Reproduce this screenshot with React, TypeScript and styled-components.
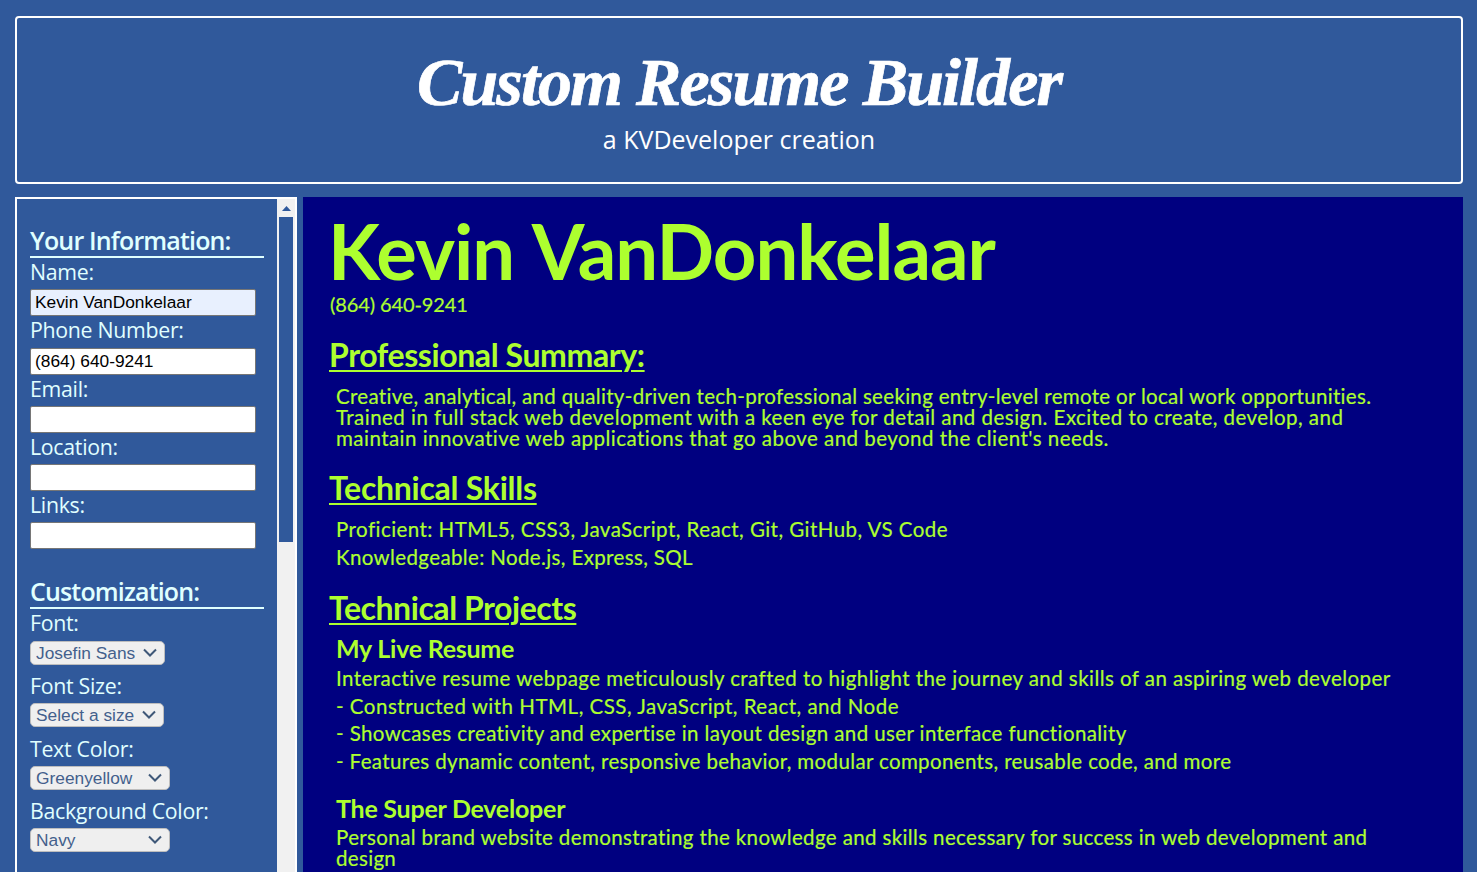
import React from "react";
import styled, { createGlobalStyle } from "styled-components";

const Global = createGlobalStyle`
  html, body { margin: 0; padding: 0; height: 100%; overflow: hidden; background: #30599b; }
  * { box-sizing: border-box; }
`;

const Page = styled.div`
  height: 872px;
  padding: 16px 14px 0 15px;
  display: flex;
  flex-direction: column;
  gap: 13px;
  overflow: hidden;
`;

const Header = styled.header`
  height: 168px;
  flex: none;
  border: 2px solid #fff;
  border-radius: 4px;
  display: flex;
  flex-direction: column;
  align-items: center;
  color: #fff;
`;

const Title = styled.h1`
  margin: 24px 0 0;
  font: italic 700 68px/80px "Liberation Serif", serif;
  letter-spacing: -1.9px;
  -webkit-text-stroke: 0.7px #fff;
`;

const Tagline = styled.div`
  margin-top: -1px;
  font: 400 25px/36px "Open Sans", sans-serif;
`;

const Body = styled.div`
  flex: 1;
  min-height: 0;
  display: flex;
  gap: 6px;
`;

const Sidebar = styled.aside`
  width: 282px;
  flex: none;
  border: 2px solid #fff;
  border-bottom: none;
  display: flex;
  overflow: hidden;
  color: #e0ffff;
`;

const SideContent = styled.div`
  flex: 1;
  padding: 27px 12px 0 13px;
  font-family: "Open Sans", sans-serif;
`;

const Track = styled.div`
  width: 18px;
  flex: none;
  background: #f1f1f1;
  padding: 0 2px;
  display: flex;
  flex-direction: column;
  align-items: center;
`;

const ArrowBox = styled.div`
  height: 18px;
  width: 100%;
  display: flex;
  align-items: center;
  justify-content: center;
`;

const Thumb = styled.div`
  width: 14px;
  height: 325px;
  background: #30599b;
`;

const SideHeading = styled.h2<{ $top?: number }>`
  margin: ${(p) => p.$top ?? 0}px 0 0;
  height: 32px;
  width: 234px;
  border-bottom: 2px solid #e0ffff;
  font: 600 25px/28px "Open Sans", sans-serif;
  letter-spacing: -0.85px;
  white-space: nowrap;
`;

const Field = styled.label`
  display: block;
`;

const FieldLabel = styled.div`
  font: 400 21.33px/28px "Open Sans", sans-serif;
  height: 30.25px;
  margin-bottom: 1px;
  letter-spacing: -0.3px;
`;

const TextInput = styled.input<{ $autofilled?: boolean }>`
  display: block;
  width: 226px;
  height: 27px;
  padding: 1px 4px;
  border: 1px solid #767676;
  border-radius: 2px;
  background: ${(p) => (p.$autofilled ? "#e8f0fe" : "#fff")};
  color: #000;
  font: 400 17.33px "Liberation Sans", sans-serif;
  outline: none;
`;

const SelectField = styled.label`
  display: block;
  margin-bottom: 7.67px;
  height: 55px;
`;

const SelectWrap = styled.div<{ $w: number }>`
  position: relative;
  width: ${(p) => p.$w}px;
  height: 24px;
`;

const SelectBox = styled.select`
  display: block;
  appearance: none;
  width: 100%;
  height: 100%;
  border: 1px solid #bdbdbd;
  border-radius: 5px;
  background: #efefef;
  color: #43608c;
  font: 400 17.33px "Liberation Sans", sans-serif;
  padding: 0 0 0 5px;
  outline: none;
`;

const Chevron = styled.svg`
  position: absolute;
  right: 8px;
  top: 7px;
  width: 14px;
  height: 10px;
  pointer-events: none;
`;

const Resume = styled.main`
  flex: 1;
  min-width: 0;
  background: navy;
  color: #adff2f;
  padding: 12px 26px 0 27px;
  font-family: Lato, sans-serif;
  overflow: hidden;
`;

const Name = styled.h1`
  margin: 0 0 0 -2px;
  font: 700 76px/83px "Lato", sans-serif;
  letter-spacing: -1px;
  word-spacing: 3px;
`;

const Phone = styled.div`
  font: 400 20px/24px "Lato", sans-serif;
  letter-spacing: -0.1px;
  -webkit-text-stroke: 0.2px #adff2f;
`;

const SectionHeading = styled.h2<{ $top: number; $ls: number }>`
  margin: ${(p) => p.$top}px 0 0 -1px;
  font: 700 32px/40px "Lato", sans-serif;
  letter-spacing: ${(p) => p.$ls}px;
  text-decoration: underline;
  text-decoration-thickness: 2px;
  text-underline-offset: 3px;
`;

const Block = styled.div`
  padding-left: 6px;
`;

const Paragraph = styled.div<{ $top: number }>`
  margin-top: ${(p) => p.$top}px;
`;

const ParagraphLine = styled.div<{ $ls: number }>`
  font: 400 20.5px/21px "Lato", sans-serif;
  letter-spacing: ${(p) => p.$ls}px;
  white-space: nowrap;
  -webkit-text-stroke: 0.2px #adff2f;
`;

const Line = styled.div<{ $h?: number; $ls: number; $top?: number }>`
  margin-top: ${(p) => p.$top ?? 0}px;
  font: 400 20.5px/${(p) => p.$h ?? 27.67}px "Lato", sans-serif;
  letter-spacing: ${(p) => p.$ls}px;
  white-space: nowrap;
  -webkit-text-stroke: 0.2px #adff2f;
`;

const Project = styled.h3<{ $top: number }>`
  margin: ${(p) => p.$top}px 0 0;
  font: 700 25px/33px "Lato", sans-serif;
  letter-spacing: -0.24px;
`;

const selects = [
  { label: "Font:", value: "Josefin Sans", w: 135 },
  { label: "Font Size:", value: "Select a size", w: 134 },
  { label: "Text Color:", value: "Greenyellow", w: 140 },
  { label: "Background Color:", value: "Navy", w: 140 },
];

const inputs = [
  { label: "Name:", value: "Kevin VanDonkelaar", auto: true },
  { label: "Phone Number:", value: "(864) 640-9241" },
  { label: "Email:", value: "" },
  { label: "Location:", value: "" },
  { label: "Links:", value: "" },
];

export default function App() {
  return (
    <Page>
      <Global />
      <Header>
        <Title>Custom Resume Builder</Title>
        <Tagline>a KVDeveloper creation</Tagline>
      </Header>
      <Body>
        <Sidebar>
          <SideContent>
            <SideHeading>Your Information:</SideHeading>
            {inputs.map((f) => (
              <Field key={f.label}>
                <FieldLabel>{f.label}</FieldLabel>
                <TextInput readOnly value={f.value} $autofilled={f.auto} />
              </Field>
            ))}
            <SideHeading $top={28}>Customization:</SideHeading>
            {selects.map((s) => (
              <SelectField key={s.label}>
                <FieldLabel>{s.label}</FieldLabel>
                <SelectWrap $w={s.w}>
                  <SelectBox defaultValue={s.value}>
                    <option>{s.value}</option>
                  </SelectBox>
                  <Chevron viewBox="0 0 14 10">
                    <path d="M1 1.5 L7 7.5 L13 1.5" fill="none" stroke="#3f5878" strokeWidth="2" />
                  </Chevron>
                </SelectWrap>
              </SelectField>
            ))}
          </SideContent>
          <Track>
            <ArrowBox>
              <svg width="9" height="5" viewBox="0 0 9 5">
                <path d="M0 5 L4.5 0 L9 5 Z" fill="#30599b" />
              </svg>
            </ArrowBox>
            <Thumb />
          </Track>
        </Sidebar>
        <Resume>
          <Name>Kevin VanDonkelaar</Name>
          <Phone>(864) 640-9241</Phone>
          <SectionHeading $top={19} $ls={-0.4}>Professional Summary:</SectionHeading>
          <Block>
            <Paragraph $top={11}>
              <ParagraphLine $ls={0.32}>
                Creative, analytical, and quality-driven tech-professional seeking entry-level remote or local work opportunities.
              </ParagraphLine>
              <ParagraphLine $ls={0.47}>
                Trained in full stack web development with a keen eye for detail and design. Excited to create, develop, and
              </ParagraphLine>
              <ParagraphLine $ls={0.47}>
                maintain innovative web applications that go above and beyond the client's needs.
              </ParagraphLine>
            </Paragraph>
          </Block>
          <SectionHeading $top={19} $ls={-0.27}>Technical Skills</SectionHeading>
          <Block>
            <Line $top={7} $h={28} $ls={0.45}>Proficient: HTML5, CSS3, JavaScript, React, Git, GitHub, VS Code</Line>
            <Line $h={28} $ls={0.37}>Knowledgeable: Node.js, Express, SQL</Line>
          </Block>
          <SectionHeading $top={17} $ls={-0.45}>Technical Projects</SectionHeading>
          <Block>
            <Project $top={4}>My Live Resume</Project>
            <Line $ls={0.45}>Interactive resume webpage meticulously crafted to highlight the journey and skills of an aspiring web developer</Line>
            <Line $ls={0.5}>- Constructed with HTML, CSS, JavaScript, React, and Node</Line>
            <Line $ls={0.4}>- Showcases creativity and expertise in layout design and user interface functionality</Line>
            <Line $ls={0.36}>- Features dynamic content, responsive behavior, modular components, reusable code, and more</Line>
            <Project $top={16}>The Super Developer</Project>
            <Paragraph $top={2}>
              <ParagraphLine $ls={0.37}>
                Personal brand website demonstrating the knowledge and skills necessary for success in web development and
              </ParagraphLine>
              <ParagraphLine $ls={0.32}>design</ParagraphLine>
            </Paragraph>
          </Block>
        </Resume>
      </Body>
    </Page>
  );
}
